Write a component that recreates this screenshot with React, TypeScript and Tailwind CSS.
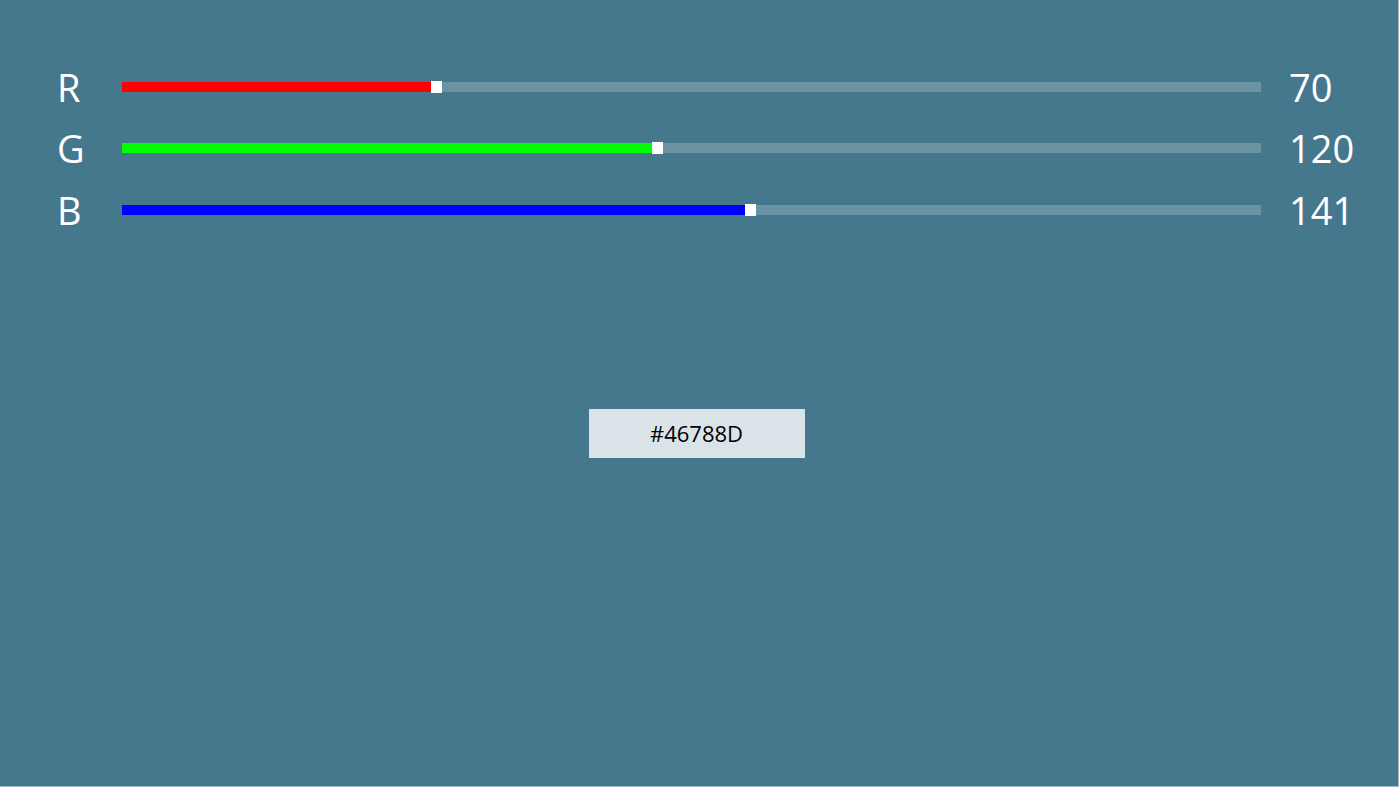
import React, { useState } from 'react';

type Channel = { key: 'r' | 'g' | 'b'; label: string; color: string };

const CHANNELS: Channel[] = [
  { key: 'r', label: 'R', color: 'bg-[#ff0000]' },
  { key: 'g', label: 'G', color: 'bg-[#00ff00]' },
  { key: 'b', label: 'B', color: 'bg-[#0000ff]' },
];

const TRACK_W = 1138;
const THUMB_W = 11;

const ColorSlider: React.FC<{ value: number; fill: string }> = ({ value, fill }) => {
  const left = (value / 255) * (TRACK_W - THUMB_W);
  return (
    <div className="relative h-[12px] w-full flex items-center">
      <div className="h-[10px] w-full bg-[#6b93a4]" />
      <div className={`absolute left-0 h-[10px] ${fill}`} style={{ width: left }} />
      <div className="absolute top-0 h-[12px] w-[11px] bg-white" style={{ left }} />
    </div>
  );
};

const App: React.FC = () => {
  const [rgb] = useState({ r: 70, g: 120, b: 141 });
  const hex =
    '#' +
    [rgb.r, rgb.g, rgb.b]
      .map((v) => v.toString(16).padStart(2, '0'))
      .join('')
      .toUpperCase();

  return (
    <div
      className="w-full h-[787px] bg-[#46788d] border-r border-b border-[#a3bac4] text-white"
      style={{ fontFamily: '"Open Sans", "Noto Sans", sans-serif' }}
    >
      <div className="pt-[56px] pl-[57px] pr-[43px] flex flex-col">
        {CHANNELS.map((c) => (
          <div key={c.key} className="h-[61.5px] flex items-center">
            <div className="w-[65px] text-[38px] leading-none">{c.label}</div>
            <div className="flex-1">
              <ColorSlider value={rgb[c.key]} fill={c.color} />
            </div>
            <div className="w-[94px] pl-[28px] text-[38px] leading-none">{rgb[c.key]}</div>
          </div>
        ))}
      </div>
      <div className="mt-[168px] flex justify-center pr-[5px]">
        <button className="w-[216px] h-[49px] bg-[#dae4e8] text-black text-[22px] flex items-center justify-center">
          {hex}
        </button>
      </div>
    </div>
  );
};

export default App;
